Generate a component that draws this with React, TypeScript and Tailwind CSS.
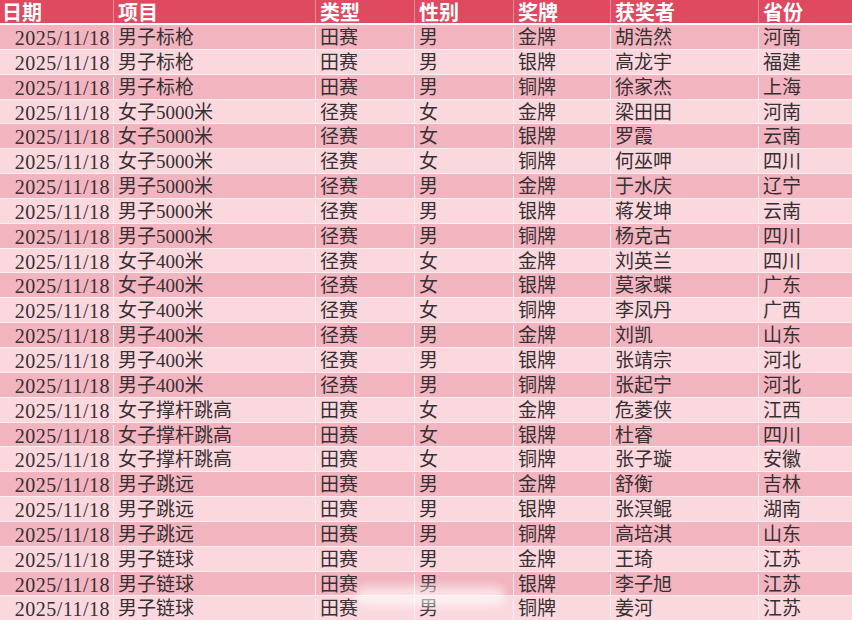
import React from 'react'

const COLUMNS = ['日期', '项目', '类型', '性别', '奖牌', '获奖者', '省份']

const ROWS: [string, string, string, string, string, string][] = [
  ['男子标枪', '田赛', '男', '金牌', '胡浩然', '河南'],
  ['男子标枪', '田赛', '男', '银牌', '高龙宇', '福建'],
  ['男子标枪', '田赛', '男', '铜牌', '徐家杰', '上海'],
  ['女子5000米', '径赛', '女', '金牌', '梁田田', '河南'],
  ['女子5000米', '径赛', '女', '银牌', '罗霞', '云南'],
  ['女子5000米', '径赛', '女', '铜牌', '何巫呷', '四川'],
  ['男子5000米', '径赛', '男', '金牌', '于水庆', '辽宁'],
  ['男子5000米', '径赛', '男', '银牌', '蒋发坤', '云南'],
  ['男子5000米', '径赛', '男', '铜牌', '杨克古', '四川'],
  ['女子400米', '径赛', '女', '金牌', '刘英兰', '四川'],
  ['女子400米', '径赛', '女', '银牌', '莫家蝶', '广东'],
  ['女子400米', '径赛', '女', '铜牌', '李凤丹', '广西'],
  ['男子400米', '径赛', '男', '金牌', '刘凯', '山东'],
  ['男子400米', '径赛', '男', '银牌', '张靖宗', '河北'],
  ['男子400米', '径赛', '男', '铜牌', '张起宁', '河北'],
  ['女子撑杆跳高', '田赛', '女', '金牌', '危菱侠', '江西'],
  ['女子撑杆跳高', '田赛', '女', '银牌', '杜睿', '四川'],
  ['女子撑杆跳高', '田赛', '女', '铜牌', '张子璇', '安徽'],
  ['男子跳远', '田赛', '男', '金牌', '舒衡', '吉林'],
  ['男子跳远', '田赛', '男', '银牌', '张溟鲲', '湖南'],
  ['男子跳远', '田赛', '男', '铜牌', '高培淇', '山东'],
  ['男子链球', '田赛', '男', '金牌', '王琦', '江苏'],
  ['男子链球', '田赛', '男', '银牌', '李子旭', '江苏'],
  ['男子链球', '田赛', '男', '铜牌', '姜河', '江苏'],
]

const GRID = 'grid grid-cols-[113px_202px_99px_99px_97px_148px_94px]'

export default function App() {
  return (
    <div className="relative h-[620px] w-[852px] overflow-hidden bg-[#fad8de] font-['Liberation_Serif','Noto_Sans_CJK_SC',serif] text-[19px] text-[#363033]">
      <div className={`${GRID} h-[25px] border-b-2 border-white bg-[#df4a60] font-['Noto_Sans_CJK_SC',sans-serif] text-[20px] font-bold leading-[23px] text-white`}>
        {COLUMNS.map((c, i) => (
          <div
            key={c}
            className={`whitespace-nowrap ${i === 0 ? 'pl-[2px]' : 'border-l border-[#ec8d9b] pl-[4px]'}`}
          >
            {c}
          </div>
        ))}
      </div>

      {ROWS.map((row, r) => (
        <div
          key={r}
          className={`${GRID} h-[24.85px] border-b border-[#fdeef1] pt-[2px] leading-[22px] ${r % 2 === 0 ? 'bg-[#f2b4bf]' : 'bg-[#fad8de]'}`}
        >
          <div className="whitespace-nowrap pr-[3px] text-right text-[20px] tracking-[0.5px]">
            2025/11/18
          </div>
          {row.map((v, i) => (
            <div key={i} className="whitespace-nowrap border-l border-[#fdeef1] pl-[4px]">
              {v}
            </div>
          ))}
        </div>
      ))}

      {/* blurred watermark */}
      <div className="absolute left-[355px] top-[586px] h-[20px] w-[150px] rounded-full bg-white/60 blur-[5px]" />
    </div>
  )
}
